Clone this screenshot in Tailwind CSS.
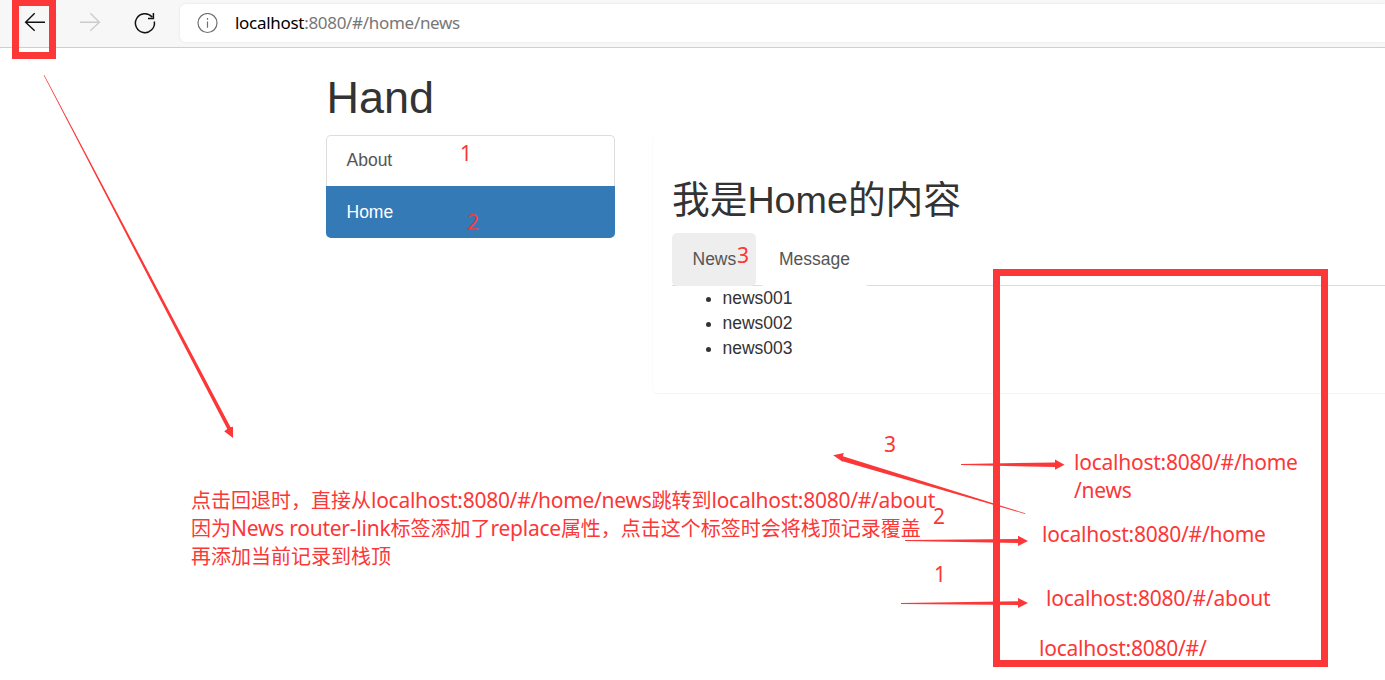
<!DOCTYPE html>
<html lang="zh">
<head>
<meta charset="utf-8">
<title>Hand</title>
<script src="https://cdn.jsdelivr.net/npm/@tailwindcss/browser@4"></script>
</head>
<body class="relative h-[680px] w-[1385px] overflow-hidden bg-white font-['Liberation_Sans','Noto_Sans_CJK_SC',sans-serif] text-[17.5px] leading-[25px] text-[#333]">
  <header class="flex h-12 items-start border-b border-[#cfcfcf] bg-[#f7f7f7]">
    <svg class="h-[47px] w-[180px] shrink-0" viewBox="0 0 180 47" fill="none" stroke-width="1.4">
      <path d="M45 22.3H25.8M34.7 13.2L25.6 22.3l9.1 8.4" stroke="#111"/>
      <path d="M80 22.3h19.2M90.3 13.2l9.1 9.1-9.1 8.4" stroke="#ccc"/>
      <path d="M154.3 21.5a9.5 9.5 0 1 1-2.2-4.6M153.4 13v5.4H148" stroke="#111" stroke-width="1.5"/>
    </svg>
    <div class="mt-1 flex h-[38px] flex-1 items-center rounded-l-md bg-white pl-[17px] shadow-[0_0_3px_rgba(0,0,0,0.08)]">
      <svg class="size-[21px]" viewBox="0 0 21 21" fill="none" stroke="#707070" stroke-width="1.2"><circle cx="10.5" cy="10" r="9.5"/><path d="M10.5 8.5v6.3M10.5 5v1.7"/></svg>
      <span class="ml-[17px] pb-0.5 font-['Noto_Sans'] text-[17px] tracking-[-0.3px] text-[#777]"><span class="text-black">localhost</span>:8080/#/home/news</span>
    </div>
  </header>

  <main class="pl-[326px]">
    <h1 class="pt-[25px] pl-[0.5px] text-[45px] leading-[50px]">Hand</h1>
    <div class="mt-3 flex items-start">
      <nav class="w-[289px] shrink-0">
        <a class="block h-[51px] rounded-t-[5px] border border-b-0 border-[#ddd] pt-3 pl-[19.5px] text-[#555]">About</a>
        <a class="block h-[52px] rounded-b-[5px] bg-[#337ab7] pt-[14px] pl-[20.5px] text-white">Home</a>
      </nav>
      <section class="ml-[37px] h-[259px] flex-1 rounded-l-[5px] border border-r-0 border-t-transparent border-b-[#f4f4f4] border-l-[#fafafa] pl-[19px]">
        <h2 class="pt-[41px] text-[37.7px] leading-[46px]">我是Home的内容</h2>
        <div class="mt-[10px] flex h-[53px] border-b border-[#ddd]">
          <a class="h-[53px] w-[84px] rounded-[5px] bg-[#eee] pt-[14px] pl-[20.5px] text-[#555]">News</a>
          <a class="ml-[3px] h-[53px] w-[111px] rounded-[5px] bg-white pt-[14px] pl-5 text-[#555]">Message</a>
        </div>
        <ul class="list-disc pl-[50.5px]">
          <li>news001</li>
          <li>news002</li>
          <li>news003</li>
        </ul>
      </section>
    </div>
  </main>

  <!-- Red annotations over the page -->
  <svg class="absolute inset-0 h-[680px] w-[1385px]" viewBox="0 0 1385 680" fill="#fc3737">
    <path d="M12 0h44v59H12zM19 6v46h30V6z" fill-rule="evenodd"/>
    <path d="M993 269h335v398H993zM1000 276v384h321V276z" fill-rule="evenodd"/>
    <path d="M43.7 75.2L44.3 75 230.6 427.2 233 426.8V438L224.2 431.3 227.3 429z"/>
    <path d="M1025.3 513.3L1025.1 514 842.5 461.2 843.3 462.2 833.2 455.2 843.8 453 842.8 456.3z"/>
    <path d="M961 464l94-1.6v-3l9.5 5.3-9.5 5v-2.7L961 465z"/>
    <path d="M905 540l113-1.1v-3.2l10 5.3-10 5v-3L905 541z"/>
    <path d="M901 603l117-1.8V598l10 5-10 5v-3L901 604z"/>
  </svg>
  <div class="font-['Noto_Sans','Noto_Sans_CJK_SC',sans-serif] text-[21px] leading-7 tracking-[-0.24px] whitespace-nowrap text-[#fc3737]">
    <span class="absolute left-[460px] top-[139px]">1</span>
    <span class="absolute left-[467px] top-[208px]">2</span>
    <span class="absolute left-[737px] top-[241px]">3</span>
    <span class="absolute left-[884px] top-[430px]">3</span>
    <span class="absolute left-[933px] top-[502px]">2</span>
    <span class="absolute left-[934px] top-[560px]">1</span>
    <p class="absolute left-[191px] top-[487px] text-[20px] tracking-normal">点击回退时，直接从<span class="text-[21px] leading-none tracking-[-0.27px]">localhost:8080/#/home/news</span>跳转到<span class="text-[21px] leading-none tracking-[-0.27px]">localhost:8080/#/about</span><br>因为<span class="text-[21px] leading-none tracking-[-0.24px]">News router-link</span>标签添加了<span class="text-[21px] leading-none tracking-[-0.24px]">replace</span>属性，点击这个标签时会将栈顶记录覆盖<br>再添加当前记录到栈顶</p>
    <span class="absolute left-[1074px] top-[448px]">localhost:8080/#/home<br>/news</span>
    <span class="absolute left-[1042px] top-[520px]">localhost:8080/#/home</span>
    <span class="absolute left-[1046px] top-[584px]">localhost:8080/#/about</span>
    <span class="absolute left-[1039px] top-[634px]">localhost:8080/#/</span>
  </div>
</body>
</html>
